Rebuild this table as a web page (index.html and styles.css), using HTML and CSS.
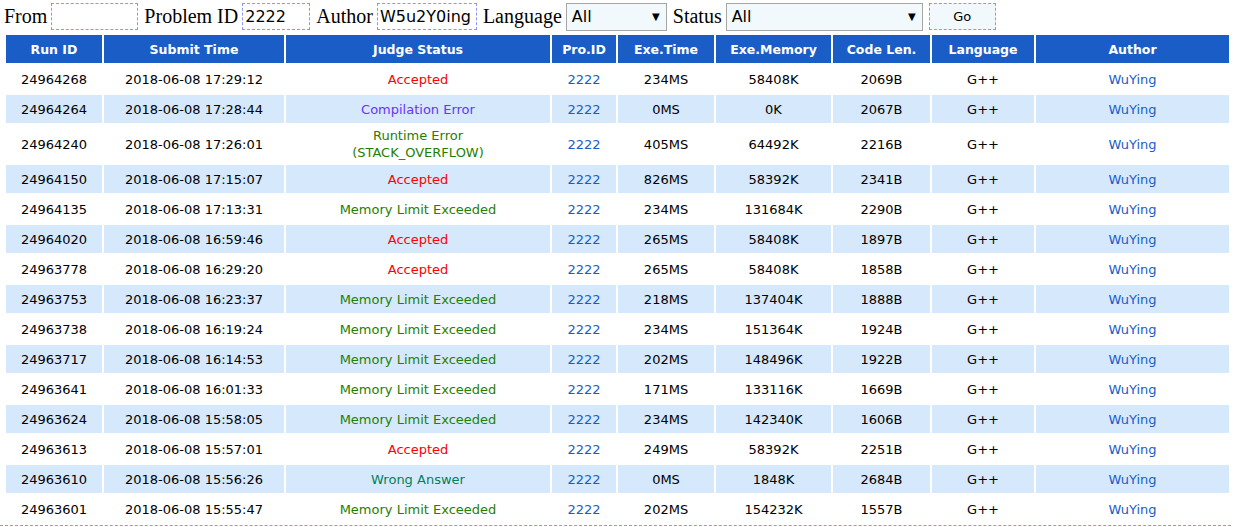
FILE: index.html
```html
<!DOCTYPE html>
<html>
<head>
<meta charset="utf-8">
<link rel="stylesheet" href="styles.css">
</head>
<body>
<form class="filter">
  <label class="lbl">From</label><input class="txt w-from" type="text" value="">
  <label class="lbl">Problem ID</label><input class="txt w-pid" type="text" value="2222">
  <label class="lbl">Author</label><input class="txt w-author" type="text" value="W5u2Y0ing">
  <label class="lbl">Language</label>
  <div class="sel w-lang"><span>All</span><span class="arrow">▼</span></div>
  <label class="lbl">Status</label>
  <div class="sel w-status"><span>All</span><span class="arrow">▼</span></div>
  <button class="go" type="button">Go</button>
</form>
<div class="wrap">
<table class="status">
  <colgroup>
    <col class="c1"><col class="c2"><col class="c3"><col class="c4"><col class="c5"><col class="c6"><col class="c7"><col class="c8"><col class="c9">
  </colgroup>
  <thead>
    <tr><th>Run ID</th><th>Submit Time</th><th>Judge Status</th><th>Pro.ID</th><th>Exe.Time</th><th>Exe.Memory</th><th>Code Len.</th><th>Language</th><th>Author</th></tr>
  </thead>
  <tbody>
    <tr><td>24964268</td><td>2018-06-08 17:29:12</td><td class="ac">Accepted</td><td><a>2222</a></td><td>234MS</td><td>58408K</td><td>2069B</td><td>G++</td><td><a>WuYing</a></td></tr>
    <tr class="alt"><td>24964264</td><td>2018-06-08 17:28:44</td><td class="ce">Compilation Error</td><td><a>2222</a></td><td>0MS</td><td>0K</td><td>2067B</td><td>G++</td><td><a>WuYing</a></td></tr>
    <tr><td>24964240</td><td>2018-06-08 17:26:01</td><td class="re">Runtime Error<br>(STACK_OVERFLOW)</td><td><a>2222</a></td><td>405MS</td><td>64492K</td><td>2216B</td><td>G++</td><td><a>WuYing</a></td></tr>
    <tr class="alt"><td>24964150</td><td>2018-06-08 17:15:07</td><td class="ac">Accepted</td><td><a>2222</a></td><td>826MS</td><td>58392K</td><td>2341B</td><td>G++</td><td><a>WuYing</a></td></tr>
    <tr><td>24964135</td><td>2018-06-08 17:13:31</td><td class="mle">Memory Limit Exceeded</td><td><a>2222</a></td><td>234MS</td><td>131684K</td><td>2290B</td><td>G++</td><td><a>WuYing</a></td></tr>
    <tr class="alt"><td>24964020</td><td>2018-06-08 16:59:46</td><td class="ac">Accepted</td><td><a>2222</a></td><td>265MS</td><td>58408K</td><td>1897B</td><td>G++</td><td><a>WuYing</a></td></tr>
    <tr><td>24963778</td><td>2018-06-08 16:29:20</td><td class="ac">Accepted</td><td><a>2222</a></td><td>265MS</td><td>58408K</td><td>1858B</td><td>G++</td><td><a>WuYing</a></td></tr>
    <tr class="alt"><td>24963753</td><td>2018-06-08 16:23:37</td><td class="mle">Memory Limit Exceeded</td><td><a>2222</a></td><td>218MS</td><td>137404K</td><td>1888B</td><td>G++</td><td><a>WuYing</a></td></tr>
    <tr><td>24963738</td><td>2018-06-08 16:19:24</td><td class="mle">Memory Limit Exceeded</td><td><a>2222</a></td><td>234MS</td><td>151364K</td><td>1924B</td><td>G++</td><td><a>WuYing</a></td></tr>
    <tr class="alt"><td>24963717</td><td>2018-06-08 16:14:53</td><td class="mle">Memory Limit Exceeded</td><td><a>2222</a></td><td>202MS</td><td>148496K</td><td>1922B</td><td>G++</td><td><a>WuYing</a></td></tr>
    <tr><td>24963641</td><td>2018-06-08 16:01:33</td><td class="mle">Memory Limit Exceeded</td><td><a>2222</a></td><td>171MS</td><td>133116K</td><td>1669B</td><td>G++</td><td><a>WuYing</a></td></tr>
    <tr class="alt"><td>24963624</td><td>2018-06-08 15:58:05</td><td class="mle">Memory Limit Exceeded</td><td><a>2222</a></td><td>234MS</td><td>142340K</td><td>1606B</td><td>G++</td><td><a>WuYing</a></td></tr>
    <tr><td>24963613</td><td>2018-06-08 15:57:01</td><td class="ac">Accepted</td><td><a>2222</a></td><td>249MS</td><td>58392K</td><td>2251B</td><td>G++</td><td><a>WuYing</a></td></tr>
    <tr class="alt"><td>24963610</td><td>2018-06-08 15:56:26</td><td class="wa">Wrong Answer</td><td><a>2222</a></td><td>0MS</td><td>1848K</td><td>2684B</td><td>G++</td><td><a>WuYing</a></td></tr>
    <tr><td>24963601</td><td>2018-06-08 15:55:47</td><td class="mle">Memory Limit Exceeded</td><td><a>2222</a></td><td>202MS</td><td>154232K</td><td>1557B</td><td>G++</td><td><a>WuYing</a></td></tr>
  </tbody>
</table>
</div>
</body>
</html>
```
FILE: styles.css
```css
html, body {
  margin: 0;
  padding: 0;
  background: #ffffff;
}
body {
  font-family: "DejaVu Sans", Verdana, sans-serif;
  font-size: 13px;
  color: #000;
}
.filter {
  display: flex;
  align-items: center;
  height: 33px;
  padding-left: 4px;
  margin: 0;
}
.lbl {
  font-family: "Liberation Serif", "Times New Roman", serif;
  font-size: 20px;
  margin-right: 4px;
}
.txt {
  box-sizing: border-box;
  height: 27px;
  margin: 0 6px 0 0;
  padding: 0 2px;
  border: 1px dashed #8a97f5;
  background: #fff;
  font-family: "DejaVu Sans", sans-serif;
  font-size: 16px;
  color: #000;
  outline: none;
}
.w-from { width: 87px; }
.w-pid { width: 68px; }
.w-author { width: 100px; }
.sel {
  box-sizing: border-box;
  height: 28px;
  margin-right: 6px;
  border: 1px solid #a6a6a6;
  background: #f2f9fd;
  display: flex;
  align-items: center;
  justify-content: space-between;
  padding: 0 6px 0 5px;
  font-family: "DejaVu Sans", sans-serif;
  font-size: 16px;
}
.sel .arrow {
  font-size: 10px;
  color: #000;
}
.w-lang { width: 101px; }
.w-status { width: 197px; }
.go {
  box-sizing: border-box;
  width: 67px;
  height: 27px;
  margin: 0;
  border: 1px dashed #8a97f5;
  background: #f2f9fd;
  font-family: "DejaVu Sans", sans-serif;
  font-size: 13px;
  color: #000;
  padding: 0;
}
.wrap {
  width: 1231px;
  border-bottom: 1px dashed #8a97f5;
}
.status {
  margin-left: 4px;
  border-collapse: separate;
  border-spacing: 2px;
  table-layout: fixed;
  width: 1227px;
}
.c1 { width: 96px; }
.c2 { width: 180px; }
.c3 { width: 264px; }
.c4 { width: 64px; }
.c5 { width: 96px; }
.c6 { width: 115px; }
.c7 { width: 97px; }
.c8 { width: 102px; }
.c9 { width: 193px; }
.status th {
  background: #1b5dc7;
  color: #fff;
  font-weight: bold;
  font-size: 12.5px;
  height: 28px;
  padding: 0;
  text-align: center;
  vertical-align: middle;
}
.status td {
  height: 28px;
  padding: 2px 0;
  line-height: 17px;
  text-align: center;
  vertical-align: middle;
  box-sizing: border-box;
}
.status tr.alt td {
  background: #d6e9fc;
}
.status a {
  color: #1a5cc8;
  text-decoration: none;
}
.ac { color: #ff0000; }
.ce { color: #6633ff; }
.re { color: #1f8000; }
.mle { color: #1f8000; }
.wa { color: #00805a; }
```
